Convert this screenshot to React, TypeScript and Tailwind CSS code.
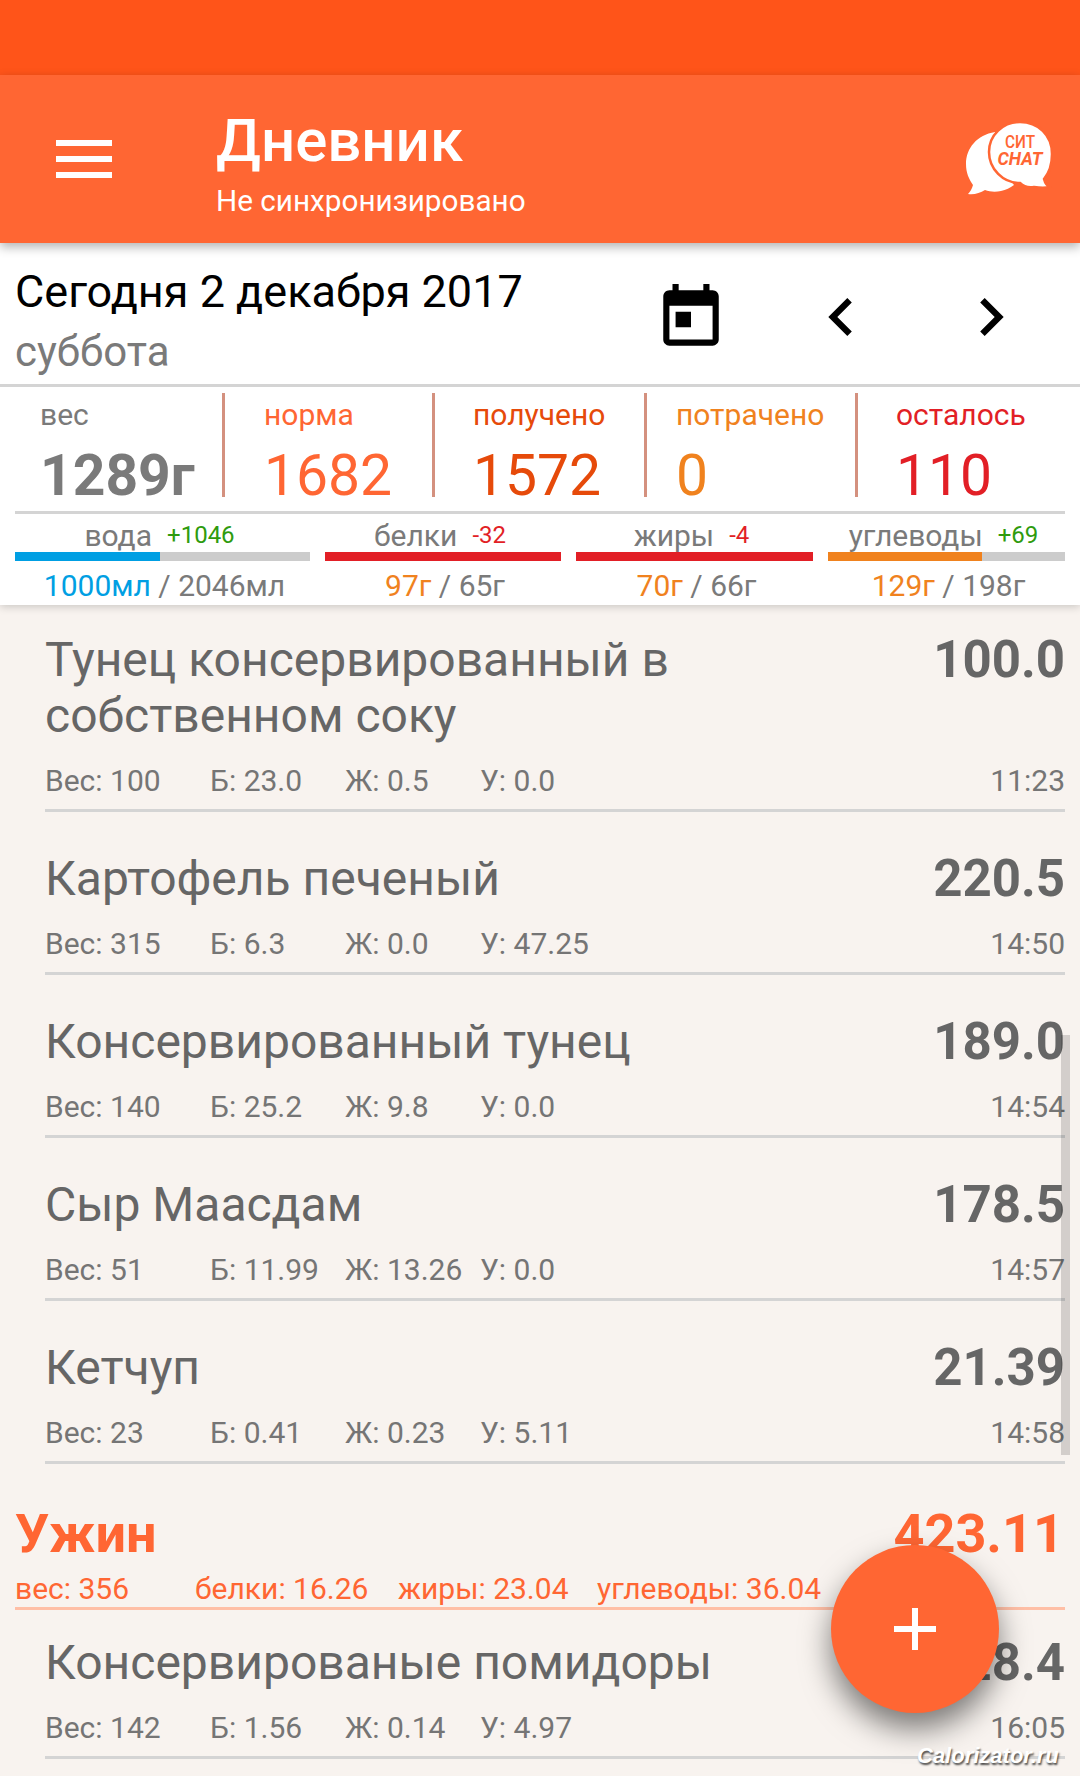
const font = { fontFamily: "Roboto, sans-serif" };

const foods = [
  { name: "Тунец консервированный в собственном соку", kcal: "100.0", w: "100", p: "23.0", f: "0.5", c: "0.0", time: "11:23" },
  { name: "Картофель печеный", kcal: "220.5", w: "315", p: "6.3", f: "0.0", c: "47.25", time: "14:50" },
  { name: "Консервированный тунец", kcal: "189.0", w: "140", p: "25.2", f: "9.8", c: "0.0", time: "14:54" },
  { name: "Сыр Маасдам", kcal: "178.5", w: "51", p: "11.99", f: "13.26", c: "0.0", time: "14:57" },
  { name: "Кетчуп", kcal: "21.39", w: "23", p: "0.41", f: "0.23", c: "5.11", time: "14:58" },
];

const FoodRow = ({ item }: { item: (typeof foods)[number] }) => (
  <div className="ml-[45px] mr-[15px] border-b-[3px] border-[#d4d4d4] text-[#666666]">
    <div className="flex items-start justify-between">
      <div className="w-[670px] text-[48px] leading-[56px]">{item.name}</div>
      <div className="text-[51px] leading-[56px] font-bold">{item.kcal}</div>
    </div>
    <div className="mt-[15px] flex h-[50px] items-start text-[30px] leading-[44px] text-[#757575]">
      <span className="w-[165px]">Вес: {item.w}</span>
      <span className="w-[135px]">Б: {item.p}</span>
      <span className="w-[135px]">Ж: {item.f}</span>
      <span>У: {item.c}</span>
      <span className="ml-auto">{item.time}</span>
    </div>
  </div>
);

const Stat = ({ label, value, color, pad, bold }: { label: string; value: string; color: string; pad: string; bold?: boolean }) => (
  <div className={`h-[104px] pt-[4px] ${pad} ${color}`}>
    <div className="text-[30px] leading-[36px]">{label}</div>
    <div className={`mt-[15px] text-[57px] leading-[56px] ${bold ? "font-bold" : ""}`}>{value}</div>
  </div>
);

const Macro = ({ label, diff, diffColor, fill, fillColor, got, norm, gotColor, width }: { label: string; diff: string; diffColor: string; fill: number; fillColor: string; got: string; norm: string; gotColor: string; width: string }) => (
  <div className={width}>
    <div className="flex h-[38px] items-center justify-center pt-[4px] pr-[6px] text-[#7a7a7a]">
      <span className="text-[30px]">{label}</span>
      <span className={`ml-[15px] text-[24px] ${diffColor}`}>{diff}</span>
    </div>
    <div className="h-[9px] bg-[#cccccc]">
      <div className={`h-full ${fillColor}`} style={{ width: `${fill}%` }} />
    </div>
    <div className="mt-[3px] pl-[4px] text-center text-[30px] leading-[44px] text-[#7a7a7a]">
      <span className={gotColor}>{got}</span> / {norm}
    </div>
  </div>
);

const Logo = () => (
  <svg width="88" height="74" viewBox="0 0 88 74">
    <path d="M30 11C12 14 1 27 1 43c0 9 3 15 7 21-1 4-3 7-5 9 6 1 12-1 17-4 5 2 11 2 16 1 5-1 9-3 13-6L30 40z" fill="#ffffff" />
    <path d="M55 1C38 1 24 14 24 31s14 31 31 31c3 3 8 5 14 4 6 1 12 1 16 0-3-1-5-4-6-8 5-6 8-15 8-25C87 14 73 1 55 1z" fill="#ffffff" stroke="#ff6633" strokeWidth="2.5" />
    <text x="55" y="27" textAnchor="middle" fontFamily="Roboto, sans-serif" fontSize="19" fontWeight="500" textLength="30" lengthAdjust="spacingAndGlyphs" fill="#ff6633">СИТ</text>
    <text x="55" y="44" textAnchor="middle" fontFamily="Roboto, sans-serif" fontSize="19" fontWeight="700" fontStyle="italic" textLength="45" lengthAdjust="spacingAndGlyphs" fill="#ff6633">CHAT</text>
  </svg>
);

export default function App() {
  return (
    <div className="relative h-[1776px] w-[1080px] overflow-hidden bg-[#f8f3ef]" style={font}>
      <div className="relative z-10 bg-white shadow-[0_2px_8px_rgba(0,0,0,0.18)]">
        <div className="h-[75px] bg-[#ff5419]" />
        <div className="flex h-[168px] items-center bg-[#ff6633] pr-[27px] pl-[56px] text-white shadow-[0_4px_10px_rgba(0,0,0,0.3)]">
          <svg width="56" height="38" viewBox="0 0 56 38" fill="#ffffff">
            <rect width="56" height="6" y="0" />
            <rect width="56" height="6" y="16" />
            <rect width="56" height="6" y="32" />
          </svg>
          <div className="mt-[9px] ml-[104px]">
            <div className="text-[60px] leading-[70px] font-medium">Дневник</div>
            <div className="mt-[5px] text-[29.7px] leading-[40px]">Не синхронизировано</div>
          </div>
          <div className="mb-[2px] ml-auto flex">
            <Logo />
          </div>
        </div>

        <div className="flex h-[144px] items-center border-b-[3px] border-[#d4d4d4]">
          <div className="mt-[10px] w-[663px] pl-[15px]">
            <div className="text-[45px] leading-[60px] text-black">Сегодня 2 декабря 2017</div>
            <div className="mt-[6px] text-[42px] leading-[48px] text-[#7a7a7a]">суббота</div>
          </div>
          <svg width="74" height="74" viewBox="0 0 24 24" className="mt-[8px] ml-[-9px]">
            <path d="M19 3h-1V1h-2v2H8V1H6v2H5c-1.11 0-1.99.9-1.99 2L3 19c0 1.1.89 2 2 2h14c1.1 0 2-.9 2-2V5c0-1.1-.9-2-2-2zm0 16H5V8h14v11zM7 10h5v5H7z" />
          </svg>
          <svg width="76" height="76" viewBox="0 0 24 24" className="mt-[7px] ml-[75px]">
            <path d="M15.41 7.41L14 6l-6 6 6 6 1.41-1.41L10.83 12z" />
          </svg>
          <svg width="76" height="76" viewBox="0 0 24 24" className="mt-[7px] ml-[74px]">
            <path d="M8.59 16.59L10 18l6-6-6-6-1.41 1.41L13.17 12z" />
          </svg>
        </div>

        <div className="grid grid-cols-[222px_210px_212px_211px_225px] pt-[6px] pb-[14px]">
          <Stat label="вес" value="1289г" color="text-[#7a7a7a]" pad="pl-[40px]" bold />
          <div className="border-l-[3px] border-[#d4917f]">
            <Stat label="норма" value="1682" color="text-[#ff6633]" pad="pl-[39px]" />
          </div>
          <div className="border-l-[3px] border-[#d4917f]">
            <Stat label="получено" value="1572" color="text-[#e64a0a]" pad="pl-[38px]" />
          </div>
          <div className="border-l-[3px] border-[#d4917f]">
            <Stat label="потрачено" value="0" color="text-[#f0821e]" pad="pl-[29px]" />
          </div>
          <div className="border-l-[3px] border-[#d4917f]">
            <Stat label="осталось" value="110" color="text-[#e21f26]" pad="pl-[38px]" />
          </div>
        </div>

        <div className="mx-[15px] flex h-[94px] gap-[15px] border-t-[3px] border-[#d4d4d4] pb-0">
          <Macro label="вода" diff="+1046" diffColor="text-[#2e9b0e]" fill={49} fillColor="bg-[#009fe3]" got="1000мл" norm="2046мл" gotColor="text-[#009fe3]" width="w-[295px]" />
          <Macro label="белки" diff="-32" diffColor="text-[#e21f26]" fill={100} fillColor="bg-[#e21f26]" got="97г" norm="65г" gotColor="text-[#f0821e]" width="w-[236px]" />
          <Macro label="жиры" diff="-4" diffColor="text-[#e21f26]" fill={100} fillColor="bg-[#e21f26]" got="70г" norm="66г" gotColor="text-[#f0821e]" width="w-[237px]" />
          <Macro label="углеводы" diff="+69" diffColor="text-[#2e9b0e]" fill={65} fillColor="bg-[#f0821e]" got="129г" norm="198г" gotColor="text-[#f0821e]" width="w-[237px]" />
        </div>
      </div>

      <div className="flex flex-col gap-[39px] pt-[27px]">
        {foods.map((item) => (
          <FoodRow key={item.time} item={item} />
        ))}
      </div>

      <div className="mx-[15px] mt-[39px] border-b-[3px] border-[#ffbfa6] text-[#ff6633]">
        <div className="flex justify-between text-[54px] leading-[62px] font-bold">
          <span>Ужин</span>
          <span className="mr-[1px]">423.11</span>
        </div>
        <div className="flex h-[42px] items-center pt-[4px] text-[30px]">
          <span className="w-[180px]">вес: 356</span>
          <span className="w-[203px]">белки: 16.26</span>
          <span className="w-[199px]">жиры: 23.04</span>
          <span>углеводы: 36.04</span>
        </div>
      </div>

      <div className="mt-[25px]">
        <FoodRow item={{ name: "Консервированые помидоры", kcal: "228.4", w: "142", p: "1.56", f: "0.14", c: "4.97", time: "16:05" }} />
      </div>

      <div className="absolute top-[1035px] right-[10px] h-[420px] w-[9px] bg-[#000000]/15" />

      <button className="absolute top-[1545px] left-[831px] flex h-[168px] w-[168px] items-center justify-center rounded-full bg-[#ff6633] shadow-[0_16px_30px_rgba(0,0,0,0.5)]">
        <svg width="42" height="42" viewBox="0 0 42 42" fill="#ffffff">
          <rect x="18" width="6" height="42" />
          <rect y="18" width="42" height="6" />
        </svg>
      </button>

      <div className="absolute top-[1739px] left-[917px] text-[22px] font-bold text-white italic [text-shadow:1px_2px_2px_rgba(0,0,0,0.7)]" style={{ fontFamily: "'Liberation Sans', sans-serif" }}>
        Calorizator.ru
      </div>
    </div>
  );
}
